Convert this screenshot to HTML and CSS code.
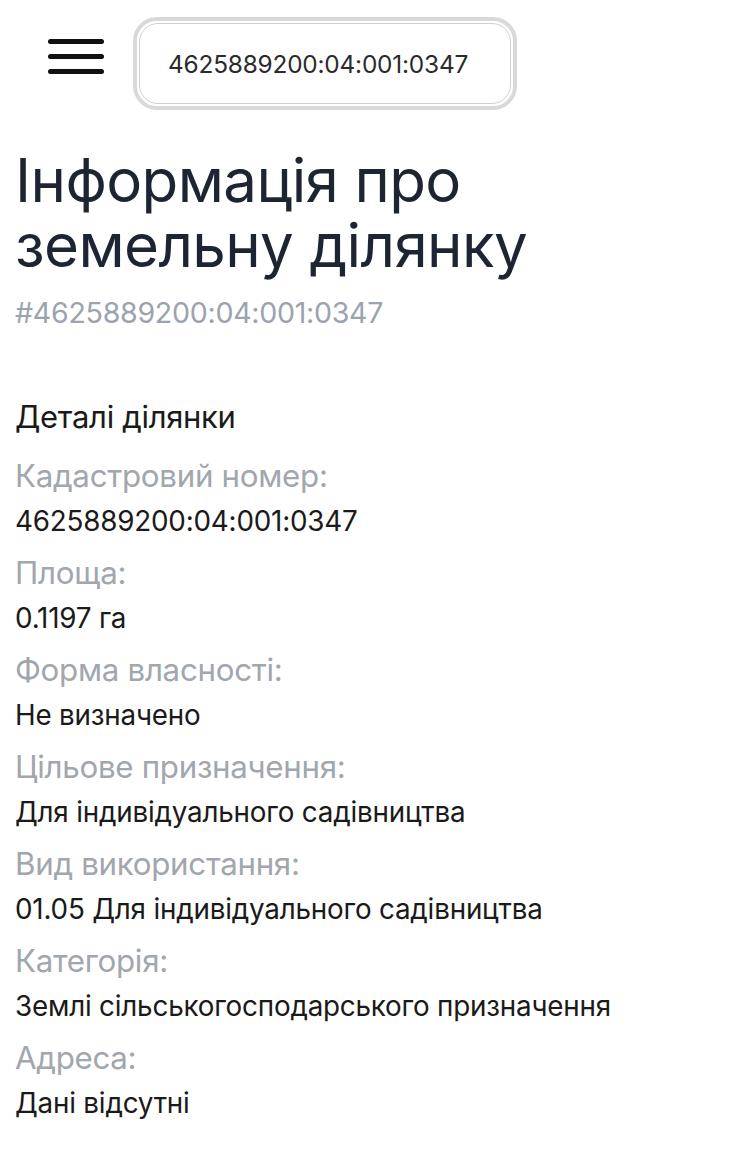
FILE: index.html
```html
<!DOCTYPE html>
<html lang="uk">
<head>
<meta charset="utf-8">
<title>Інформація про земельну ділянку</title>
<link rel="stylesheet" href="styles.css">
</head>
<body>
<header class="topbar">
  <button class="burger" aria-label="Меню">
    <span></span><span></span><span></span>
  </button>
  <div class="search">
    <div class="search-input">4625889200:04:001:0347</div>
  </div>
</header>
<main class="content">
  <h1 class="title">Інформація про земельну ділянку</h1>
  <p class="subtitle">#4625889200:04:001:0347</p>
  <h2 class="section">Деталі ділянки</h2>
  <dl class="details">
    <dt>Кадастровий номер:</dt>
    <dd>4625889200:04:001:0347</dd>
    <dt>Площа:</dt>
    <dd>0.1197 га</dd>
    <dt>Форма власності:</dt>
    <dd>Не визначено</dd>
    <dt>Цільове призначення:</dt>
    <dd>Для індивідуального садівництва</dd>
    <dt>Вид використання:</dt>
    <dd>01.05 Для індивідуального садівництва</dd>
    <dt>Категорія:</dt>
    <dd>Землі сільськогосподарського призначення</dd>
    <dt>Адреса:</dt>
    <dd>Дані відсутні</dd>
  </dl>
</main>
</body>
</html>
```
FILE: styles.css
```css
* { box-sizing: border-box; }
html, body { margin: 0; padding: 0; background: #ffffff; }
body {
  font-family: Inter, "Noto Sans", "DejaVu Sans", sans-serif;
  color: #1f2633;
}
.topbar {
  display: flex;
  align-items: flex-start;
  padding: 17px 0 0 48px;
  height: 111px;
}
.burger {
  margin-top: 22px;
  width: 56px;
  padding: 0;
  border: 0;
  background: none;
  display: flex;
  flex-direction: column;
  gap: 10.5px;
}
.burger span {
  display: block;
  height: 4.5px;
  border-radius: 3px;
  background: #111111;
}
.search {
  margin-left: 29px;
  width: 384px;
  height: 93px;
  border: 4px solid #d9d9d9;
  border-radius: 24px;
  padding: 2px;
}
.search-input {
  height: 100%;
  border: 1.5px solid #d0d0d0;
  border-radius: 19px;
  display: flex;
  align-items: center;
  padding-left: 28px;
  font-size: 24.4px;
  color: #2b2b2b;
  letter-spacing: -0.2px;
}
.content { padding: 0 15px; }
.title {
  margin: 37px 0 0;
  font-size: 60px;
  line-height: 65px;
  font-weight: 400;
  color: #1e2532;
  letter-spacing: -0.6px;
}
.subtitle {
  margin: 17px 0 0;
  font-size: 28.6px;
  line-height: 36px;
  color: #9ca3af;
  letter-spacing: -0.3px;
}
.section {
  margin: 67px 0 0;
  font-size: 31px;
  line-height: 38px;
  font-weight: 400;
  color: #1a1a1a;
  letter-spacing: -0.3px;
}
.details { margin: 18px 0 0; }
.details dt {
  margin: 0;
  font-size: 31.3px;
  line-height: 45px;
  color: #a2a6ad;
  letter-spacing: -0.3px;
}
.details dd {
  margin: 0 0 7px;
  font-size: 27.8px;
  line-height: 45px;
  color: #1a1a1a;
  letter-spacing: -0.2px;
}
```
